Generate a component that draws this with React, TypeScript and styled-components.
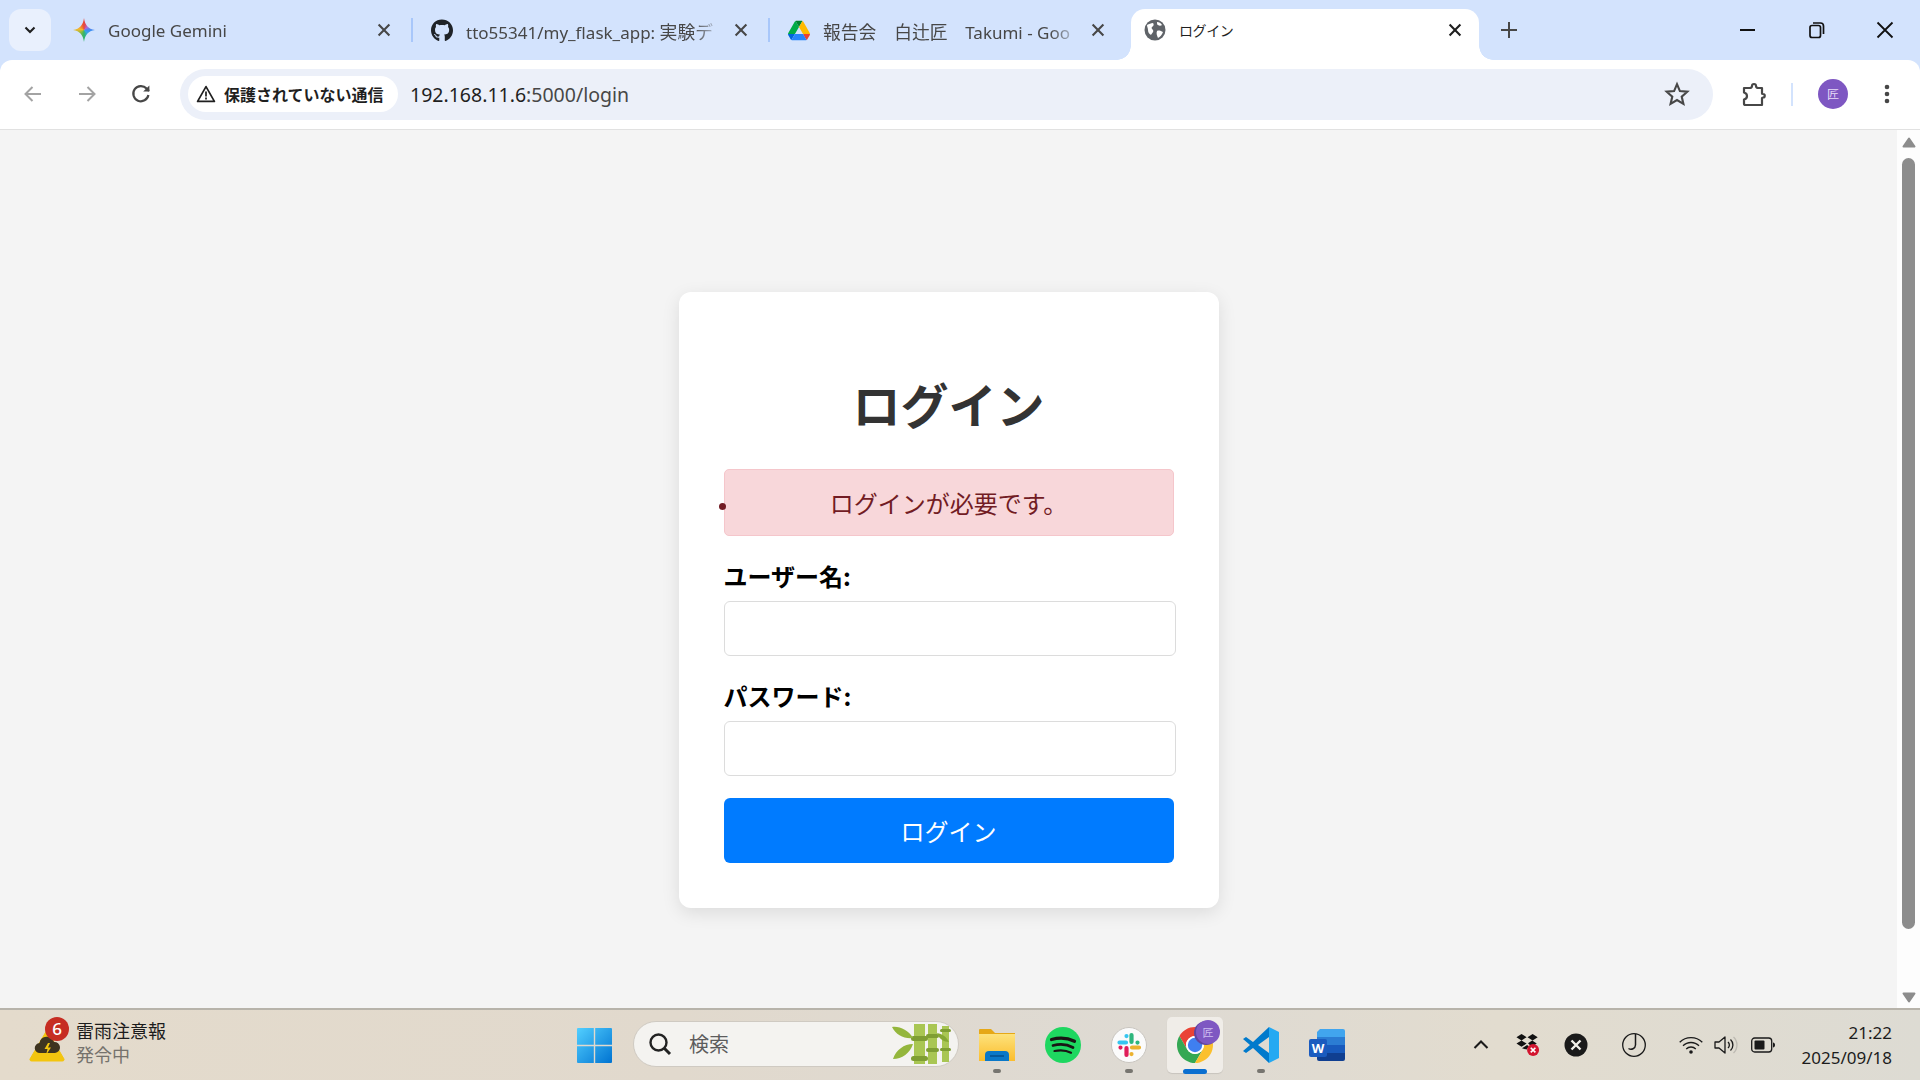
import React from "react";
import styled, { createGlobalStyle } from "styled-components";
import { FaGithub } from "react-icons/fa";

const UI = `"Noto Sans", "Open Sans", "Noto Sans CJK JP", sans-serif`;
const JP = `"Noto Sans CJK JP", "Noto Sans", sans-serif`;

const Global = createGlobalStyle`
  html, body { margin: 0; padding: 0; height: 100%; overflow: hidden; background: #d3e3fd; }
  #root { height: 100%; }
  * { box-sizing: border-box; }
`;

const Screen = styled.div`
  height: 100vh;
  display: flex;
  flex-direction: column;
  font-family: ${UI};
  background: #d3e3fd;
`;

/* ---------- tab strip ---------- */
const TabStrip = styled.div`
  height: 60px;
  flex: none;
  display: flex;
  align-items: flex-start;
  padding: 9px 0 0 9px;
`;
const TabSearch = styled.div`
  width: 42px;
  height: 42px;
  margin-right: 4px;
  border-radius: 12px;
  background: #e9f0fd;
  display: flex;
  align-items: center;
  justify-content: center;
`;
const Tab = styled.div<{ $w: number; $active?: boolean }>`
  position: relative;
  width: ${(p) => p.$w}px;
  height: 51px;
  flex: none;
  display: flex;
  align-items: center;
  padding: 0 0 9px ${(p) => (p.$active ? 13 : 18)}px;
  ${(p) =>
    p.$active
      ? `
    background: #fff;
    border-radius: 14px 14px 0 0;
    &::before, &::after {
      content: "";
      position: absolute;
      bottom: 0;
      width: 14px;
      height: 14px;
    }
    &::before { left: -14px; background: radial-gradient(circle at 0 0, transparent 13.5px, #fff 14px); }
    &::after { right: -14px; background: radial-gradient(circle at 100% 0, transparent 13.5px, #fff 14px); }
  `
      : ""}
`;
const TabIcon = styled.span`
  width: 22px;
  height: 22px;
  flex: none;
  margin-right: 13px;
  display: flex;
  align-items: center;
  justify-content: center;
  color: #1f2328;
`;
const TabTitle = styled.span<{ $active?: boolean }>`
  flex: 1;
  min-width: 0;
  margin-top: ${(p) => (p.$active ? 0 : 1)}px;
  white-space: nowrap;
  overflow: hidden;
  font-size: ${(p) => (p.$active ? 14 : 17)}px;
  letter-spacing: ${(p) => (p.$active ? -0.4 : 0)}px;
  color: ${(p) => (p.$active ? "#1f1f1f" : "#474747")};
  -webkit-mask-image: ${(p) =>
    p.$active ? "none" : "linear-gradient(90deg, #000 calc(100% - 30px), transparent)"};
  mask-image: ${(p) =>
    p.$active ? "none" : "linear-gradient(90deg, #000 calc(100% - 30px), transparent)"};
`;
const TabCjk = styled.span`
  font-size: 17.8px;
  font-family: ${JP};
`;
const TabClose = styled.span<{ $right: number; $dark?: boolean }>`
  width: 16px;
  height: 16px;
  flex: none;
  margin: 0 ${(p) => p.$right}px 0 10px;
  color: ${(p) => (p.$dark ? "#1f1f1f" : "#474747")};
  display: flex;
`;
const TabSeparator = styled.div`
  width: 2px;
  height: 24px;
  margin-top: 9px;
  flex: none;
  background: #a8c7fa;
`;
const NewTab = styled.span`
  width: 20px;
  height: 20px;
  margin: 11px 0 0 20px;
  color: #474747;
  display: flex;
`;
const WindowControls = styled.div`
  margin-left: auto;
  display: flex;
  align-items: center;
  padding: 11px 25px 0 0;
  color: #111;
`;
const WindowButton = styled.span<{ $gap?: number }>`
  width: 20px;
  height: 20px;
  margin-left: ${(p) => p.$gap ?? 0}px;
  display: flex;
`;

/* ---------- toolbar ---------- */
const Toolbar = styled.div`
  height: 70px;
  flex: none;
  display: flex;
  align-items: center;
  padding: 0 21px 1px 21px;
  background: #fff;
  border-radius: 12px 12px 0 0;
  border-bottom: 1px solid #e1e1e1;
`;
const NavButton = styled.span<{ $gap?: number; $color?: string }>`
  width: 24px;
  height: 24px;
  flex: none;
  margin-left: ${(p) => p.$gap ?? 0}px;
  color: ${(p) => p.$color ?? "#474747"};
  display: flex;
`;
const Omnibox = styled.div`
  flex: 1;
  height: 51px;
  margin-left: 27px;
  border-radius: 26px;
  background: #ecf0f9;
  display: flex;
  align-items: center;
  padding: 0 23px 0 8px;
`;
const SecurityChip = styled.div`
  height: 36px;
  width: 210px;
  flex: none;
  border-radius: 18px;
  background: #fff;
  display: flex;
  align-items: center;
  padding-left: 8px;
  gap: 8px;
  font: 700 16px ${JP};
  color: #1f1f1f;
  white-space: nowrap;
`;
const Url = styled.div`
  margin-left: 12px;
  font-size: 19.5px;
  color: #1f1f1f;
  white-space: nowrap;
  flex: 1;
`;
const UrlDim = styled.span`
  color: #474747;
`;
const ToolbarDivider = styled.div`
  width: 2px;
  height: 23px;
  flex: none;
  margin-left: 25px;
  background: #d3e3fd;
`;
const Avatar = styled.div`
  width: 30px;
  height: 30px;
  flex: none;
  margin-left: 25px;
  border-radius: 50%;
  background: #7e57c2;
  color: #e8def8;
  font: 12px/30px ${JP};
  text-align: center;
`;

/* ---------- page ---------- */
const Viewport = styled.div`
  flex: 1;
  min-height: 0;
  display: flex;
`;
const Page = styled.main`
  flex: 1;
  background: #f4f4f4;
  display: flex;
  justify-content: center;
  align-items: flex-start;
  padding-top: 162px;
  font-family: ${JP};
`;
const Card = styled.div`
  width: 540px;
  padding: 45px;
  background: #fff;
  border-radius: 12px;
  box-shadow: 0 5px 18px rgba(0, 0, 0, 0.1);
`;
const Title = styled.h1`
  margin: 37px 0 37px;
  font: 700 48px/58px ${JP};
  color: #333;
  text-align: center;
`;
const FlashList = styled.ul`
  margin: 0 0 27px;
  padding: 0;
  list-style: none;
`;
const FlashItem = styled.li`
  position: relative;
  height: 67px;
  line-height: 65px;
  background: #f8d7da;
  border: 1px solid #f5c6cb;
  border-radius: 5px;
  color: #721c24;
  font-size: 24px;
  text-align: center;
  &::before {
    content: "";
    position: absolute;
    left: -6px;
    top: 33px;
    width: 7px;
    height: 7px;
    border-radius: 50%;
    background: #721c24;
  }
`;
const Field = styled.div`
  margin-bottom: 27px;
`;
const Label = styled.label`
  display: block;
  margin-bottom: 13px;
  font: 700 24px/25px ${JP};
  color: #000;
`;
const Input = styled.input`
  display: block;
  width: 452px;
  height: 55px;
  border: 1px solid #dcdcdc;
  border-radius: 6px;
  background: #fff;
  outline: none;
`;
const Submit = styled.button`
  display: block;
  width: 450px;
  height: 65px;
  margin-top: -5px;
  padding: 0;
  border: none;
  border-radius: 6px;
  background: #007bff;
  color: #fff;
  font: 400 24px ${JP};
`;

/* ---------- scrollbar ---------- */
const Scrollbar = styled.div`
  width: 23px;
  flex: none;
  background: #fdfdfd;
  display: flex;
  flex-direction: column;
  align-items: center;
  padding: 7px 0 5px;
`;
const ScrollThumb = styled.div`
  width: 13px;
  height: 771px;
  margin-top: 10px;
  border-radius: 7px;
  background: #8c8c8c;
`;
const ScrollArrow = styled.svg<{ $down?: boolean }>`
  width: 14px;
  height: 11px;
  flex: none;
  fill: #8c8c8c;
  ${(p) => (p.$down ? "margin-top: auto; transform: scaleY(-1);" : "")}
`;

/* ---------- taskbar ---------- */
const Taskbar = styled.footer`
  height: 72px;
  flex: none;
  display: flex;
  align-items: center;
  padding-left: 29px;
  border-top: 2px solid #b7b3aa;
  background: linear-gradient(90deg, #e4dbcc 0%, #e1d9cd 35%, #dedad3 60%, #e2dccf 78%, #dddbd3 100%);
`;
const Weather = styled.div`
  width: 527px;
  flex: none;
  display: flex;
  align-items: center;
`;
const WeatherIcon = styled.div`
  position: relative;
  width: 36px;
  height: 34px;
  margin-right: 11px;
`;
const WeatherBadge = styled.span`
  position: absolute;
  top: -11px;
  right: -4px;
  width: 24px;
  height: 24px;
  border-radius: 50%;
  background: #c62d22;
  color: #fff;
  font: 500 17px/24px ${UI};
  text-align: center;
`;
const WeatherText = styled.div`
  font: 18px/24px ${JP};
  color: #1c1c1c;
  margin-top: -6px;
`;
const WeatherSub = styled.div`
  color: #75726c;
`;
const TaskTile = styled.div<{ $active?: boolean }>`
  position: relative;
  width: 56px;
  height: 56px;
  flex: none;
  margin-left: 10px;
  border-radius: 5px;
  display: flex;
  align-items: center;
  justify-content: center;
  ${(p) => (p.$active ? "background: #f0ede8; box-shadow: 0 1px 1px rgba(0,0,0,.1);" : "")}
  &:first-child { margin-left: 0; }
`;
const RunDot = styled.span<{ $active?: boolean }>`
  position: absolute;
  bottom: ${(p) => (p.$active ? -1 : 0)}px;
  left: 50%;
  transform: translateX(-50%);
  width: ${(p) => (p.$active ? 24 : 8)}px;
  height: ${(p) => (p.$active ? 5 : 4)}px;
  border-radius: 3px;
  background: ${(p) => (p.$active ? "#0a6fd0" : "#777570")};
`;
const SearchBox = styled.div`
  width: 326px;
  height: 46px;
  flex: none;
  margin: -2px 0 0 11px;
  border-radius: 23px;
  background: #f4f3f0;
  border: 1px solid #cfcac2;
  display: flex;
  align-items: center;
  padding: 0 6px 0 14px;
  gap: 17px;
  font: 20px ${JP};
  color: #5c5c5c;
`;
const SearchLabel = styled.span`
  flex: 1;
  margin-top: -2px;
`;
const CenterIcons = styled.div`
  display: flex;
  margin-left: 10px;
`;
const Tray = styled.div`
  margin-left: auto;
  display: flex;
  align-items: center;
  padding-right: 28px;
`;
const TrayIcon = styled.span<{ $gap: number }>`
  width: 24px;
  height: 24px;
  flex: none;
  margin-left: ${(p) => p.$gap}px;
  color: #1a1a1a;
  display: flex;
  align-items: center;
  justify-content: center;
`;
const Clock = styled.div`
  margin-left: 27px;
  font: 17px/25px ${UI};
  color: #1c1c1c;
  text-align: right;
  white-space: nowrap;
`;

/* ---------- drawings ---------- */
const GeminiSpark = styled.span`
  width: 22px;
  height: 24px;
  display: block;
  background: conic-gradient(#e8453c 0deg, #b06ad8 50deg, #3f8cf3 90deg, #38a7e8 130deg, #2fb56a 180deg, #8fbb3c 235deg, #f5b82e 280deg, #ef7a30 325deg, #e8453c 360deg);
  clip-path: path("M11 0C12 7 15 11 22 12C15 13 12 17 11 24C10 17 7 13 0 12C7 11 10 7 11 0Z");
`;
const Close = () => (
  <svg viewBox="0 0 16 16" width="16" height="16" fill="none" stroke="currentColor" strokeWidth="2.1">
    <path d="M2.6 2.6l10.8 10.8M13.4 2.6L2.6 13.4" />
  </svg>
);
const Drive = () => (
  <svg viewBox="0 0 87.3 78" width="23" height="21">
    <path d="m6.6 66.85 3.85 6.65c.8 1.4 1.95 2.5 3.3 3.3l13.75-23.8h-27.5c0 1.55.4 3.1 1.2 4.5z" fill="#0066da" />
    <path d="m43.65 25-13.75-23.8c-1.35.8-2.5 1.9-3.3 3.3l-25.4 44a9.06 9.06 0 0 0 -1.2 4.5h27.5z" fill="#00ac47" />
    <path d="m73.55 76.8c1.35-.8 2.5-1.9 3.3-3.3l1.6-2.75 7.65-13.25c.8-1.4 1.2-2.95 1.2-4.5h-27.502l5.852 11.5z" fill="#ea4335" />
    <path d="m43.65 25 13.75-23.8c-1.35-.8-2.9-1.2-4.5-1.2h-18.5c-1.6 0-3.15.45-4.5 1.2z" fill="#00832d" />
    <path d="m59.8 53h-32.3l-13.75 23.8c1.35.8 2.9 1.2 4.5 1.2h50.8c1.6 0 3.15-.45 4.5-1.2z" fill="#2684fc" />
    <path d="m73.4 26.5-12.7-22c-.8-1.4-1.95-2.5-3.3-3.3l-13.75 23.8 16.15 28h27.45c0-1.55-.4-3.1-1.2-4.5z" fill="#ffba00" />
  </svg>
);
const Globe = () => (
  <svg viewBox="0 0 22 22" width="22" height="22">
    <circle cx="11" cy="11" r="10.5" fill="#5f6368" />
    <path d="M3 6c2-1 4-2 6-2 1 1 1 3-1 4-1 1 0 2 1 3 1 2-1 3-2 5-2-1-3-3-3-5C4 9 3 8 3 6zM13 12c2-1 4 0 6 1-1 3-3 5-5 6-1-2-2-5-1-7zM13 3c2 0 4 1 5 3-1 1-3 1-4 0-1 0-1-2-1-3z" fill="#fff" />
  </svg>
);
const Warning = () => (
  <svg viewBox="0 0 20 20" width="20" height="20" fill="none" stroke="#1f1f1f" strokeWidth="1.7">
    <path d="M10 2.6L18.4 17.4H1.6Z" strokeLinejoin="round" />
    <path d="M10 7.5v5M10 13.6v1.8" />
  </svg>
);
const Chevron = ({ up }: { up?: boolean }) => (
  <svg viewBox="0 0 16 16" width="16" height="16" fill="none" stroke={up ? "#1a1a1a" : "#1f1f1f"} strokeWidth="2.1">
    <path d={up ? "M1.5 11L8 4.5 14.5 11" : "M3.5 5.5L8 10l4.5-4.5"} />
  </svg>
);
const ArrowIcon = ({ right }: { right?: boolean }) => (
  <svg viewBox="0 0 24 24" width="24" height="24" fill="none" stroke="currentColor" strokeWidth="2">
    <path d={right ? "M4 12h15M12.5 5l7 7-7 7" : "M20 12H5M11.5 5l-7 7 7 7"} />
  </svg>
);
const Reload = () => (
  <svg viewBox="0 0 24 24" width="24" height="24" fill="none" stroke="currentColor" strokeWidth="2.2">
    <path d="M19.4 13a7.6 7.6 0 1 1-1.8-6.4L20 9" />
    <path d="M20.4 3.4V9.6H14.2" strokeWidth="2" fill="currentColor" stroke="none" />
  </svg>
);
const Star = () => (
  <svg viewBox="0 0 26 26" width="26" height="26" fill="none" stroke="#474747" strokeWidth="2.1" strokeLinejoin="miter">
    <path d="M13 3.2l2.9 6.9 7.4.6-5.6 4.9 1.7 7.3L13 19l-6.4 3.9 1.7-7.3-5.6-4.9 7.4-.6z" />
  </svg>
);
const Puzzle = () => (
  <svg viewBox="0 0 24 26" width="24" height="26" fill="none" stroke="#474747" strokeWidth="2.2" strokeLinejoin="round" style={{ marginTop: -1 }}>
    <path d="M2 7h5.5c1.5 0 2.5-.5 2.5-2a2 2 0 0 1 4 0c0 1.500 1 2 2.500 2H20v5.500c0 .5.5.5 1 .5a1.500 1.500 0 0 1 0 3.500c-.5 0-1 0-1 .5V24H3.500C2.500 24 2 23.500 2 22.500V18.500c2-.5 3-1.500 3-3.500s-1-3-3-3.500Z" />
  </svg>
);
const Dots = () => (
  <svg viewBox="0 0 24 24" width="24" height="24" fill="#474747">
    <circle cx="12" cy="5" r="2.300" />
    <circle cx="12" cy="12" r="2.300" />
    <circle cx="12" cy="19" r="2.300" />
  </svg>
);
const WinLogo = () => (
  <svg viewBox="0 0 35 35" width="35" height="35">
    <defs>
      <linearGradient id="wl" x1="0" y1="0" x2="1" y2="1">
        <stop offset="0" stopColor="#52cfff" />
        <stop offset="1" stopColor="#0073d1" />
      </linearGradient>
    </defs>
    <path fill="url(#wl)" d="M1 0h15.800v16.800H0V1a1 1 0 0 1 1-1zM18.200 0H34a1 1 0 0 1 1 1v15.800H18.200zM0 18.200h16.800V35H1a1 1 0 0 1-1-1zM18.200 18.200H35V34a1 1 0 0 1-1 1H18.200z" />
  </svg>
);
const SearchGlass = () => (
  <svg viewBox="0 0 24 24" width="24" height="24" fill="none" stroke="#222" strokeWidth="2.400">
    <circle cx="10.500" cy="10.500" r="8" />
    <path d="M16.500 16.500L22 22" strokeWidth="3" />
  </svg>
);
const Bamboo = () => (
  <svg viewBox="0 0 60 40" width="60" height="40" style={{ flex: "none" }}>
    <g fill="#a9c653">
      <rect x="22" y="0" width="11" height="40" />
      <rect x="36" y="0" width="9" height="40" />
      <rect x="50" y="2" width="7" height="36" />
    </g>
    <g fill="#7f9e33">
      <rect x="19" y="12" width="17" height="5" rx="2.500" />
      <rect x="19" y="32" width="17" height="5" rx="2.500" />
      <rect x="34" y="10" width="13" height="4" rx="2" />
      <rect x="34" y="24" width="13" height="4" rx="2" />
      <rect x="48" y="5" width="11" height="3" rx="1.500" />
      <rect x="48" y="24" width="11" height="3" rx="1.500" />
    </g>
    <path d="M0 3c8-1 16 3 21 11C12 15 4 11 0 3zM1 35c3-9 11-15 20-15-3 9-11 15-20 15z" fill="#94b63c" />
    <path d="M45 9c5 1 9 3 12 9-5 0-10-3-12-9z" fill="#86a834" />
  </svg>
);
const Folder = () => (
  <svg viewBox="0 0 36 32" width="36" height="32">
    <defs>
      <linearGradient id="fd" x1="0" y1="0" x2="0" y2="1">
        <stop offset="0" stopColor="#fde27c" />
        <stop offset="1" stopColor="#fbbd2d" />
      </linearGradient>
    </defs>
    <path d="M1 0h11l4 4h20v28H0V1a1 1 0 0 1 1-1z" fill="#e6a817" />
    <path d="M0 5h36v27H0z" fill="url(#fd)" />
    <path d="M6 32v-6a4 4 0 0 1 4-4h16a4 4 0 0 1 4 4v6z" fill="#0a78c8" />
    <path d="M11 27h14" stroke="#054f8c" strokeWidth="1.500" />
  </svg>
);
const Spotify = () => (
  <svg viewBox="0 0 36 36" width="36" height="36" fill="none">
    <circle cx="18" cy="18" r="18" fill="#1ed760" />
    <g stroke="#191414" strokeLinecap="round">
      <path d="M6.500 12.500c8-2.200 16-1.700 23 1.800" strokeWidth="3.200" />
      <path d="M8 18.500c7-1.800 14-1.300 20 2" strokeWidth="2.700" />
      <path d="M9.500 24c6-1.300 11.500-.9 16.500 1.700" strokeWidth="2.200" />
    </g>
  </svg>
);
const Slack = () => (
  <svg viewBox="0 0 36 36" width="36" height="36" fill="none" strokeLinecap="round" strokeWidth="4.200">
    <circle cx="18" cy="18" r="17.500" fill="#fbfbfb" stroke="#c9c5bf" strokeWidth="1" />
    <path d="M8.500 15.500h6.500M15.500 9v.1" stroke="#36c5f0" />
    <path d="M20.500 8v7M26.500 15.500v.1" stroke="#2eb67d" />
    <path d="M21 20.500h7M20.500 27v.1" stroke="#ecb22e" />
    <path d="M15.500 21v7M9.500 20.500v.1" stroke="#e01e5a" />
  </svg>
);
const Chrome = () => (
  <svg viewBox="4 4 40 40" width="36" height="36">
    <path fill="#ea4335" d="M6.680 14A20 20 0 0 1 41.320 14H24A10 10 0 0 0 15.340 29Z" />
    <path fill="#34a853" d="M6.680 14A20 20 0 0 0 24 44L32.660 29A10 10 0 0 1 15.340 29Z" />
    <path fill="#fbc02d" d="M41.320 14A20 20 0 0 1 24 44L32.660 29A10 10 0 0 0 24 14Z" />
    <circle cx="24" cy="24" r="10" fill="#fff" />
    <circle cx="24" cy="24" r="8" fill="#3f7ff0" />
  </svg>
);
const ChromeBadge = styled.span`
  position: absolute;
  top: 3px;
  right: 3px;
  width: 24px;
  height: 24px;
  border-radius: 50%;
  background: #7e57c2;
  box-shadow: -2px 1px 0 #5e44a0;
  color: #cdbdf0;
  font: 11px/24px ${JP};
  text-align: center;
`;
const VSCode = () => (
  <svg viewBox="0 0 36 36" width="36" height="36">
    <path d="M26 0L36 5v26l-10 5z" fill="#24a9f2" />
    <path d="M26 0L10 15 3 10 0 12l7 6-7 6 3 2 7-5 16 15V26L15 18 26 10z" fill="#007acc" />
  </svg>
);
const WordBadge = styled.text`
  font: 700 13px ${UI};
  fill: #fff;
`;
const Word = () => (
  <svg viewBox="0 0 36 32" width="36" height="32">
    <path d="M11 0h23a2 2 0 0 1 2 2v6H8V3z" fill="#41a5ee" />
    <path d="M8 8h28v8H8z" fill="#2b7cd3" />
    <path d="M8 16h28v8H8z" fill="#185abd" />
    <path d="M8 24h28v6a2 2 0 0 1-2 2H10a2 2 0 0 1-2-2z" fill="#103f91" />
    <rect x="0" y="10" width="18" height="18" rx="2" fill="#1a5bbf" />
    <WordBadge x="9" y="24" textAnchor="middle">W</WordBadge>
  </svg>
);
const WeatherGlyph = () => (
  <svg viewBox="0 0 36 34" width="36" height="34">
    <path d="M18 2L35 31a1.500 1.500 0 0 1-1.500 2H2.500A1.500 1.500 0 0 1 1 31z" fill="#f3c50f" stroke="#f3c50f" strokeLinejoin="round" />
    <path d="M11 25a5 5 0 0 1-.5-10 7.500 7.500 0 0 1 14.500-1 5.500 5.500 0 0 1 1 11z" fill="#3e3420" />
    <path d="M19 15l-3.500 6h3l-1.500 6 5-7.500h-3l2-4.500z" fill="#f3c50f" />
  </svg>
);
const Dropbox = () => (
  <svg viewBox="0 0 26 26" width="26" height="26">
    <path d="M6 1l5.500 3.500L6 8 .5 4.500zM18 1l5.500 3.500L18 8l-5.500-3.500zM6 8l5.500 3.500L6 15 .5 11.500zM13 11l4.500-3 5 3.500L17 15zM6.500 16.500l5.500-3.500 2 1.500-2.500 3.500z" fill="#111" />
    <circle cx="18.500" cy="18.500" r="6.500" fill="#d3152f" />
    <path d="M16 16l5 5M21 16l-5 5" stroke="#fff" strokeWidth="1.800" />
  </svg>
);
const XBadge = () => (
  <svg viewBox="0 0 24 24" width="24" height="24">
    <circle cx="12" cy="12" r="11.500" fill="#1a1a1a" />
    <path d="M7.500 7.500l9 9M16.500 7.500l-9 9" stroke="#f2f0ea" strokeWidth="2.400" />
  </svg>
);
const JCircle = () => (
  <svg viewBox="0 0 24 24" width="24" height="24" fill="none" stroke="#1a1a1a" strokeWidth="1.300">
    <circle cx="12" cy="12" r="11.300" />
    <path d="M13.500 1v11a4.500 4.500 0 0 1-7 3.500" strokeWidth="1.500" />
  </svg>
);
const WifiGlyph = () => (
  <svg viewBox="0 0 24 18" width="24" height="18" fill="none" stroke="#1a1a1a" strokeWidth="1.300">
    <path d="M.700 6.300a16 16 0 0 1 22.600 0M4 9.800a11.300 11.300 0 0 1 16 0M7.200 13a6.800 6.800 0 0 1 9.600 0" />
    <circle cx="12" cy="16" r="1.800" fill="#1a1a1a" stroke="none" />
  </svg>
);
const Volume = () => (
  <svg viewBox="0 0 24 20" width="24" height="20" fill="none" stroke="#1a1a1a" strokeWidth="1.300">
    <path d="M1 7v6h4l6 5V2L5 7z" strokeLinejoin="round" />
    <path d="M14 7a4 4 0 0 1 0 6M16.500 4.500a7.500 7.500 0 0 1 0 11" />
    <path d="M19.500 2a11 11 0 0 1 0 16" stroke="#bdbab2" />
  </svg>
);
const Battery = () => (
  <svg viewBox="0 0 24 16" width="24" height="16" fill="none">
    <rect x=".700" y="1" width="20" height="14" rx="3" stroke="#1a1a1a" strokeWidth="1.300" />
    <rect x="3.500" y="3.500" width="10" height="9" rx="1" fill="#1a1a1a" />
    <path d="M22 5.500c1.200 0 2 1 2 2.500s-.8 2.500-2 2.500z" fill="#1a1a1a" />
  </svg>
);

const TabX = ({ right, dark }: { right: number; dark?: boolean }) => (
  <TabClose $right={right} $dark={dark}>
    <Close />
  </TabClose>
);

export default function App() {
  return (
    <Screen>
      <Global />
      <TabStrip>
        <TabSearch>
          <Chevron />
        </TabSearch>
        <Tab $w={356}>
          <TabIcon><GeminiSpark /></TabIcon>
          <TabTitle>Google Gemini</TabTitle>
          <TabX right={19} />
        </Tab>
        <TabSeparator />
        <Tab $w={355}>
          <TabIcon><FaGithub size={25} /></TabIcon>
          <TabTitle>tto55341/my_flask_app: <TabCjk>実験デ</TabCjk></TabTitle>
          <TabX right={19} />
        </Tab>
        <TabSeparator />
        <Tab $w={361}>
          <TabIcon><Drive /></TabIcon>
          <TabTitle><TabCjk>報告会　白辻匠　</TabCjk>Takumi - Goo</TabTitle>
          <TabX right={25} />
        </Tab>
        <Tab $w={348} $active>
          <TabIcon><Globe /></TabIcon>
          <TabTitle $active>ログイン</TabTitle>
          <TabX right={16} dark />
        </Tab>
        <NewTab>
          <svg viewBox="0 0 20 20" width="20" height="20" stroke="currentColor" strokeWidth="2"><path d="M10 2v16M2 10h16" /></svg>
        </NewTab>
        <WindowControls>
          <WindowButton>
            <svg viewBox="0 0 20 20" width="20" height="20" stroke="currentColor" strokeWidth="2"><path d="M3 10h15" /></svg>
          </WindowButton>
          <WindowButton $gap={50}>
            <svg viewBox="0 0 20 20" width="20" height="20" fill="none" stroke="currentColor" strokeWidth="1.700"><rect x="3" y="5.500" width="10.500" height="12" rx="2" /><path d="M6 3h7.500a3 3 0 0 1 3 3v8" /></svg>
          </WindowButton>
          <WindowButton $gap={48}>
            <svg viewBox="0 0 20 20" width="20" height="20" fill="none" stroke="currentColor" strokeWidth="1.800"><path d="M2.500 2.500l15 15M17.500 2.500l-15 15" /></svg>
          </WindowButton>
        </WindowControls>
      </TabStrip>

      <Toolbar>
        <NavButton $color="#a3a3a3"><ArrowIcon /></NavButton>
        <NavButton $color="#a3a3a3" $gap={29.5}><ArrowIcon right /></NavButton>
        <NavButton $gap={30.5}><Reload /></NavButton>
        <Omnibox>
          <SecurityChip>
            <Warning />
            保護されていない通信
          </SecurityChip>
          <Url>192.168.11.6<UrlDim>:5000/login</UrlDim></Url>
          <Star />
        </Omnibox>
        <NavButton $gap={29}><Puzzle /></NavButton>
        <ToolbarDivider />
        <Avatar>匠</Avatar>
        <NavButton $gap={27}><Dots /></NavButton>
      </Toolbar>

      <Viewport>
        <Page>
          <Card>
            <Title>ログイン</Title>
            <FlashList>
              <FlashItem>ログインが必要です。</FlashItem>
            </FlashList>
            <Field>
              <Label htmlFor="username">ユーザー名:</Label>
              <Input id="username" type="text" />
            </Field>
            <Field>
              <Label htmlFor="password">パスワード:</Label>
              <Input id="password" type="password" />
            </Field>
            <Submit type="button">ログイン</Submit>
          </Card>
        </Page>
        <Scrollbar>
          <ScrollArrow viewBox="0 0 14 11"><path d="M7 1.500L12.500 9.500H1.500Z" stroke="#8c8c8c" strokeWidth="2" strokeLinejoin="round" /></ScrollArrow>
          <ScrollThumb />
          <ScrollArrow $down viewBox="0 0 14 11"><path d="M7 1.500L12.500 9.500H1.500Z" stroke="#8c8c8c" strokeWidth="2" strokeLinejoin="round" /></ScrollArrow>
        </Scrollbar>
      </Viewport>

      <Taskbar>
        <Weather>
          <WeatherIcon>
            <WeatherGlyph />
            <WeatherBadge>6</WeatherBadge>
          </WeatherIcon>
          <WeatherText>
            雷雨注意報
            <WeatherSub>発令中</WeatherSub>
          </WeatherText>
        </Weather>
        <TaskTile><WinLogo /></TaskTile>
        <SearchBox>
          <SearchGlass />
          <SearchLabel>検索</SearchLabel>
          <Bamboo />
        </SearchBox>
        <CenterIcons>
          <TaskTile><Folder /><RunDot /></TaskTile>
          <TaskTile><Spotify /></TaskTile>
          <TaskTile><Slack /><RunDot /></TaskTile>
          <TaskTile $active><Chrome /><ChromeBadge>匠</ChromeBadge><RunDot $active /></TaskTile>
          <TaskTile><VSCode /><RunDot /></TaskTile>
          <TaskTile><Word /></TaskTile>
        </CenterIcons>
        <Tray>
          <TrayIcon $gap={0}><Chevron up /></TrayIcon>
          <TrayIcon $gap={23}><Dropbox /></TrayIcon>
          <TrayIcon $gap={24}><XBadge /></TrayIcon>
          <TrayIcon $gap={34}><JCircle /></TrayIcon>
          <TrayIcon $gap={33}><WifiGlyph /></TrayIcon>
          <TrayIcon $gap={11}><Volume /></TrayIcon>
          <TrayIcon $gap={13}><Battery /></TrayIcon>
          <Clock>
            21:22
            <br />
            2025/09/18
          </Clock>
        </Tray>
      </Taskbar>
    </Screen>
  );
}
